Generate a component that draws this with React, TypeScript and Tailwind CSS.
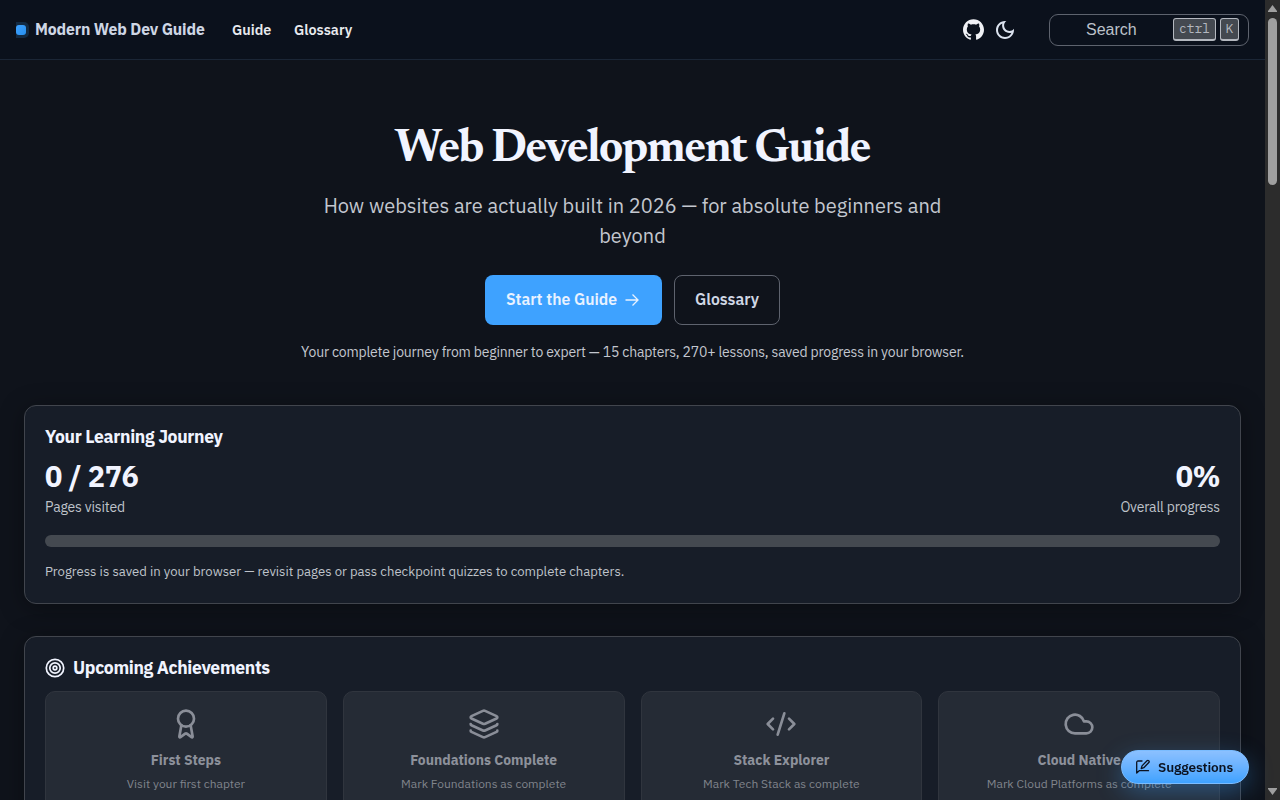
import { Award, Cloud, CodeXml, Layers, type LucideIcon } from "lucide-react";

type Achievement = {
  title: string;
  hint: string;
  icon: LucideIcon;
};

const achievements: Achievement[] = [
  { title: "First Steps", hint: "Visit your first chapter", icon: Award },
  { title: "Foundations Complete", hint: "Mark Foundations as complete", icon: Layers },
  { title: "Stack Explorer", hint: "Mark Tech Stack as complete", icon: CodeXml },
  { title: "Cloud Native", hint: "Mark Cloud Platforms as complete", icon: Cloud },
];

const GithubIcon = () => (
  <svg viewBox="0 0 24 24" className="size-[21px] text-[#f0f1f5]" fill="currentColor">
    <path d="M12 .297c-6.63 0-12 5.373-12 12 0 5.303 3.438 9.8 8.205 11.385.6.113.82-.258.82-.577 0-.285-.01-1.04-.015-2.04-3.338.724-4.042-1.61-4.042-1.61C4.422 18.07 3.633 17.7 3.633 17.7c-1.087-.744.084-.729.084-.729 1.205.084 1.838 1.236 1.838 1.236 1.07 1.835 2.809 1.305 3.495.998.108-.776.417-1.305.76-1.605-2.665-.3-5.466-1.332-5.466-5.93 0-1.31.465-2.38 1.235-3.22-.135-.303-.54-1.523.105-3.176 0 0 1.005-.322 3.3 1.23.96-.267 1.98-.399 3-.405 1.02.006 2.04.138 3 .405 2.28-1.552 3.285-1.23 3.285-1.23.645 1.653.24 2.873.12 3.176.765.84 1.23 1.91 1.23 3.22 0 4.61-2.805 5.625-5.475 5.92.42.36.81 1.096.81 2.22 0 1.606-.015 2.896-.015 3.286 0 .315.21.69.825.57C20.565 22.092 24 17.592 24 12.297c0-6.627-5.373-12-12-12" />
  </svg>
);

const MoonIcon = () => (
  <svg viewBox="0 0 24 24" className="size-6 text-[#dce3ef]" fill="currentColor">
    <path d="M9.37,5.51c-0.18,0.64-0.27,1.31-0.27,1.99c0,4.08,3.32,7.4,7.4,7.4c0.68,0,1.35-0.09,1.99-0.27C17.45,17.19,14.93,19,12,19c-3.86,0-7-3.14-7-7C5,9.07,6.81,6.55,9.37,5.51z M12,3c-4.97,0-9,4.03-9,9s4.03,9,9,9s9-4.03,9-9c0-0.46-0.04-0.92-0.1-1.36c-0.98,1.37-2.58,2.26-4.4,2.26c-2.98,0-5.4-2.42-5.4-5.4c0-1.81,0.89-3.42,2.26-4.4C12.92,3.04,12.46,3,12,3L12,3z" />
  </svg>
);

const SuggestIcon = () => (
  <svg viewBox="0 0 16 16" className="size-4" fill="none" stroke="currentColor" strokeWidth="1.3" strokeLinecap="round" strokeLinejoin="round">
    <path d="M7 2H3a1.3 1.3 0 0 0-1.3 1.3V14l2.5-2.3h9.3" />
    <path d="M6.2 9.6l.8-2.7 5-5.1a1.2 1.2 0 0 1 1.8 1.7l-5 5.2z" />
  </svg>
);

const Keys = () => (
  <div className="flex gap-1 font-['IBM_Plex_Mono','Liberation_Mono',monospace] text-[13px] text-[#b4b8bf]">
    <kbd className="flex h-[23px] w-[43px] items-center justify-center rounded-[3px] border border-b-2 border-[#b4b8bf] bg-[#444950] font-[inherit]">
      ctrl
    </kbd>
    <kbd className="flex h-[23px] w-[19px] items-center justify-center rounded-[3px] border border-b-2 border-[#b4b8bf] bg-[#444950] font-[inherit]">
      K
    </kbd>
  </div>
);

const Navbar = () => (
  <header className="flex h-[60px] shrink-0 items-center border-b border-[#1b2636] bg-[#0b111c] px-4">
    <span className="h-4 w-[13px] rounded-r-[5px] bg-[#132a42] py-[3px]">
      <span className="block size-[10px] rounded-[3px] bg-linear-to-br from-[#3ea2ff] to-[#2790f0]" />
    </span>
    <span className="ml-1.5 w-[170px] whitespace-nowrap text-[15.8px] font-bold tracking-[-0.01em] text-[#ced6e4]">
      Modern Web Dev Guide
    </span>
    <nav className="ml-[27px] flex whitespace-nowrap text-[14.4px] font-semibold text-[#e8eaee]">
      <span className="w-[62px]">Guide</span>
      <span>Glossary</span>
    </nav>
    <div className="ml-auto flex items-center gap-[9px]">
      <GithubIcon />
      <MoonIcon />
    </div>
    <div className="ml-8 flex h-8 w-[200px] items-center justify-between rounded-[9px] border border-[#5e636e] pr-[9px] pl-9">
      <span className="font-['Liberation_Sans',Arial,sans-serif] text-[16px] text-[#bcc1ca]">Search</span>
      <Keys />
    </div>
  </header>
);

const Hero = () => (
  <section className="flex flex-col items-center text-center">
    <h1 className="mt-[62px] h-[56px] whitespace-nowrap font-['Newsreader','Liberation_Serif',serif] text-[46px] leading-[56px] font-bold tracking-[-0.028em] text-[#f1f4ff]">
      Web Development Guide
    </h1>
    <p className="mt-[13px] whitespace-nowrap text-[20px] leading-[30px] text-[#c3c7cf]">
      How websites are actually built in 2026 — for absolute beginners and
      <br />
      beyond
    </p>
    <div className="mt-6 flex gap-3 text-[15.8px] font-semibold">
      <div className="flex h-[50px] w-[177px] items-center gap-2 rounded-lg bg-[#3ea2ff] pl-[21px] text-[#e9f2ff]">
        Start the Guide
        <svg viewBox="0 0 14 14" className="size-3.5" fill="none" stroke="currentColor" strokeWidth="1.3">
          <path d="M.5 7h12M7.5 1.5 13 7l-5.5 5.5" />
        </svg>
      </div>
      <div className="flex h-[50px] w-[106px] items-center justify-center rounded-lg border border-[#5e636e] text-[#d0d7e5]">
        Glossary
      </div>
    </div>
    <p className="mt-4 whitespace-nowrap text-[14px] leading-[22px] tracking-[-0.013em] text-[#c3c7cf]">
      Your complete journey from beginner to expert — 15 chapters, 270+ lessons, saved progress in your browser.
    </p>
  </section>
);

const Journey = () => (
  <section className="mt-[42px] h-[199px] shrink-0 rounded-xl border border-[#41454d] bg-[#171d28] px-5 pt-5 shadow-[0_4px_24px_rgba(0,0,0,0.35)]">
    <h2 className="text-[17.6px] leading-[22px] font-bold tracking-[-0.02em] text-[#f1f4ff]">Your Learning Journey</h2>
    <div className="mt-[7px] flex justify-between">
      <div>
        <div className="text-[28.8px] leading-[42px] font-bold tracking-[-0.012em] text-[#f1f4ff]">0 / 276</div>
        <div className="mt-px text-[14px] leading-[18px] tracking-[-0.013em] text-[#bfc3ca]">Pages visited</div>
      </div>
      <div className="text-right">
        <div className="text-[28.8px] leading-[42px] font-bold tracking-[-0.02em] text-[#f1f4ff]">0%</div>
        <div className="mt-px text-[14px] leading-[18px] tracking-[-0.013em] text-[#bfc3ca]">Overall progress</div>
      </div>
    </div>
    <div className="mt-[19px] h-3 rounded-md bg-[#444950]" />
    <p className="mt-[14px] text-[13.13px] leading-[21px] text-[#bfc3ca]">
      Progress is saved in your browser — revisit pages or pass checkpoint quizzes to complete chapters.
    </p>
  </section>
);

const AchievementCard = ({ item }: { item: Achievement }) => (
  <div className="flex h-[150px] flex-col items-center rounded-[10px] border border-[#30353e] bg-[#252b35] pt-4 whitespace-nowrap">
    <item.icon className="size-8 text-[#8a8e98]" strokeWidth={2} />
    <div className="mt-[9px] text-[13.9px] leading-[22px] font-bold text-[#8d919b]">{item.title}</div>
    <div className="mt-[3px] text-[12px] leading-5 text-[#80848c]">{item.hint}</div>
  </div>
);

const Achievements = () => (
  <section className="mt-8 h-[240px] shrink-0 rounded-xl border border-[#41454d] bg-[#171d28] px-5 pt-5 shadow-[0_4px_24px_rgba(0,0,0,0.35)]">
    <h2 className="flex items-center gap-2 text-[17.6px] leading-[22px] font-bold tracking-[-0.02em] text-[#f1f4ff]">
      <svg viewBox="0 0 20 20" className="size-5" fill="none" stroke="currentColor" strokeWidth="1.7">
        <circle cx="10" cy="10" r="8.7" />
        <circle cx="10" cy="10" r="5.2" />
        <circle cx="10" cy="10" r="1.8" />
      </svg>
      <span>Upcoming Achievements</span>
    </h2>
    <div className="mt-3 grid grid-cols-4 gap-4">
      {achievements.map((item) => (
        <AchievementCard key={item.title} item={item} />
      ))}
    </div>
  </section>
);

const Scrollbar = () => (
  <div className="flex w-[15px] shrink-0 flex-col items-center bg-[#2c2c2c] py-[5px]">
    <svg viewBox="0 0 9 7" className="h-[7px] w-[9px]" fill="#9f9f9f">
      <path d="M4.5 0 9 6v1H0V6z" />
    </svg>
    <div className="mt-1.5 h-[167px] w-[9px] rounded-full bg-[#9f9f9f]" />
    <svg viewBox="0 0 9 7" className="mt-auto h-[7px] w-[9px]" fill="#9f9f9f">
      <path d="M4.5 7 9 1V0H0v1z" />
    </svg>
  </div>
);

const App = () => {
  return (
    <div className="flex h-screen overflow-hidden bg-[#0f131b] font-['IBM_Plex_Sans',Inter,sans-serif]">
      <div className="flex min-w-0 flex-1 flex-col">
        <Navbar />
        <main className="flex min-h-0 flex-1 flex-col overflow-hidden px-6">
          <Hero />
          <Journey />
          <Achievements />
        </main>
      </div>
      <Scrollbar />
      <button className="fixed right-[31px] bottom-4 flex h-[34px] w-[128px] items-center gap-[7px] rounded-full border border-[#7bbcff] bg-linear-to-b from-[#8bc0ff] to-[#3ea2ff] pl-[13px] text-[13.6px] font-semibold tracking-[-0.01em] text-[#0b1220] shadow-[0_8px_24px_rgba(62,162,255,0.35)]">
        <SuggestIcon />
        Suggestions
      </button>
    </div>
  );
};

export default App;
